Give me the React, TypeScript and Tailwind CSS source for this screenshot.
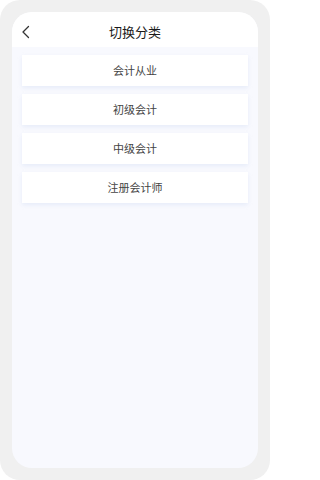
import React from "react";

const items = ["会计从业", "初级会计", "中级会计", "注册会计师"];

export default function App() {
  return (
    <div
      className="w-[270px] h-[480px] bg-white"
      style={{ fontFamily: '"Noto Sans CJK SC", "Noto Sans", sans-serif' }}
    >
      <div className="w-full h-full rounded-[20px] bg-[#f0f0f0] p-[12px]">
        <div className="w-full h-full rounded-[20px] bg-[#f8f9fe] overflow-hidden flex flex-col">
          <div className="relative h-[35px] bg-white flex items-center justify-center shrink-0">
            <svg
              className="absolute left-[9px] top-[13px]"
              width="10"
              height="14"
              viewBox="0 0 10 14"
              fill="none"
            >
              <path d="M7.5 1.5L2 7l5.5 5.5" stroke="#333" strokeWidth="1.3" strokeLinecap="round" strokeLinejoin="round" />
            </svg>
            <span className="text-[13px] font-normal text-[#1a1a1a] leading-none mt-[3px]">切换分类</span>
          </div>
          <div className="flex flex-col gap-[8px] px-[10px] pt-[8px]">
            {items.map((t) => (
              <div
                key={t}
                className="h-[31px] bg-white flex items-center justify-center text-[11px] text-[#444] shadow-[0_2px_4px_rgba(200,215,240,0.35)]"
              >
                {t}
              </div>
            ))}
          </div>
        </div>
      </div>
    </div>
  );
}
